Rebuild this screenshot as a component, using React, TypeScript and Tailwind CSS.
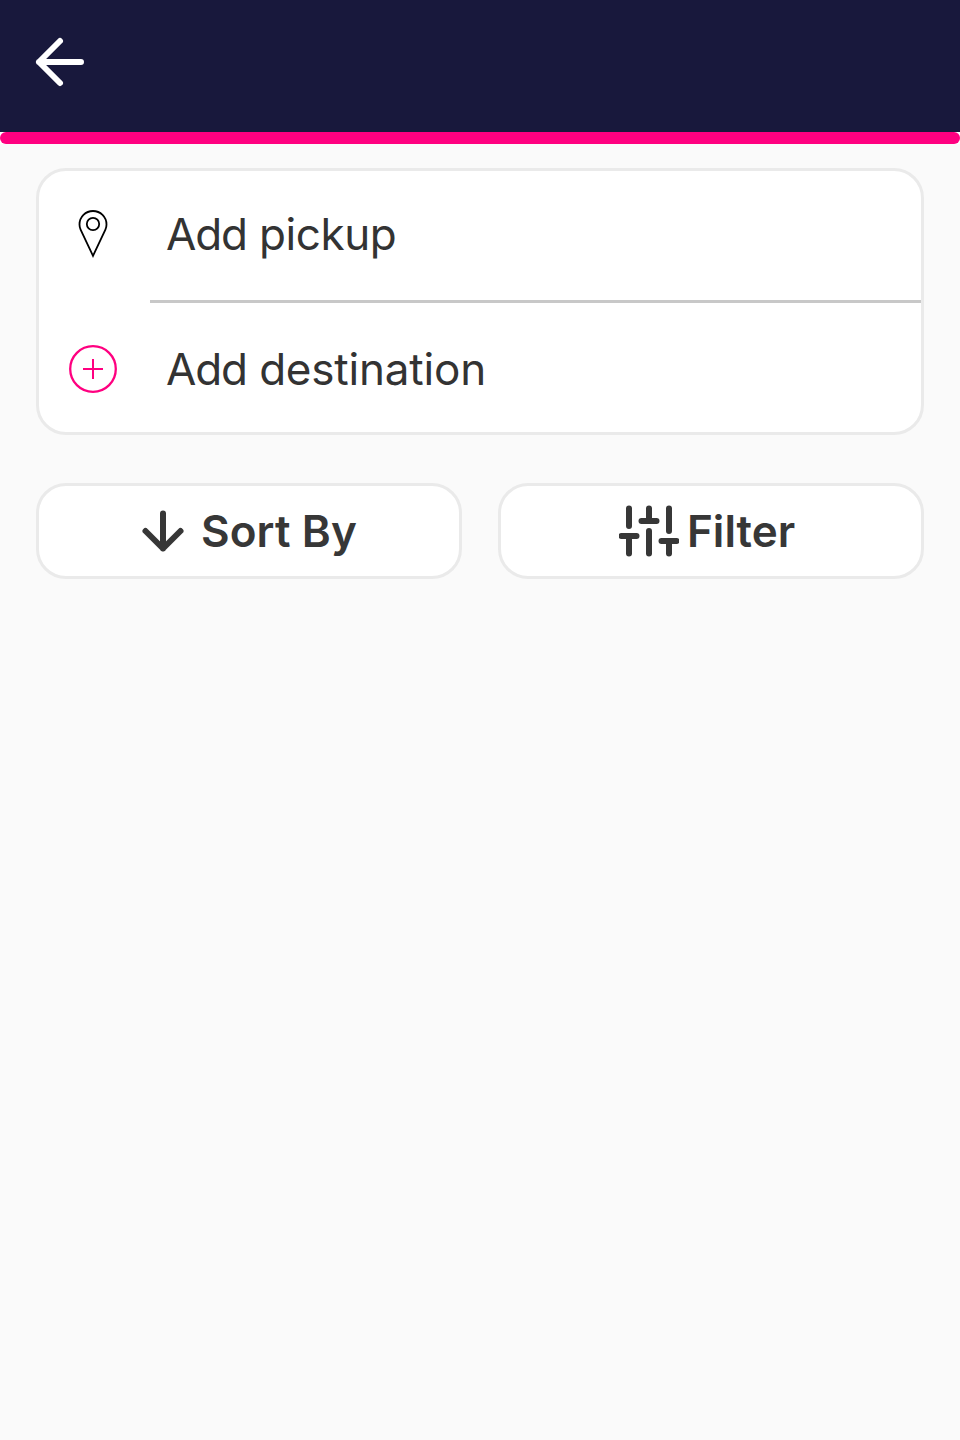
import React from "react";

function BackIcon() {
  return (
    <svg className="size-[72px]" viewBox="0 0 24 24" fill="none" stroke="#fff" strokeWidth="2" strokeLinecap="round" strokeLinejoin="round">
      <path d="M19 12H5M12 19l-7-7 7-7" />
    </svg>
  );
}

function PinIcon() {
  return (
    <svg className="size-12" viewBox="0 0 48 48" fill="none" stroke="#000" strokeWidth="1.8">
      <path d="M24 45.8L11.600 19.600C10.800 17.900 10.500 16.300 10.500 14.500a13.500 13.500 0 0 1 27 0C37.500 16.300 37.200 17.900 36.400 19.600Z" />
      <circle cx="24" cy="14" r="6.2" />
    </svg>
  );
}

function PlusCircleIcon() {
  return (
    <svg className="size-12" viewBox="0 0 48 48" fill="none" stroke="#ff0080" strokeWidth="2">
      <circle cx="24" cy="24" r="22.8" strokeWidth="2.3" />
      <path d="M14 24h20M24 14v20" />
    </svg>
  );
}

function SortIcon() {
  return (
    <svg className="size-[60px]" viewBox="0 0 24 24" fill="none" stroke="#373737" strokeWidth="2.4" strokeLinecap="round" strokeLinejoin="round">
      <path d="M12 5v14M19 12l-7 7-7-7" />
    </svg>
  );
}

function SlidersIcon() {
  return (
    <svg className="size-[60px]" viewBox="0 0 24 24" fill="none" stroke="#373737" strokeWidth="2.4" strokeLinecap="round" strokeLinejoin="round">
      <path d="M4 21v-7M4 10V3M12 21v-9M12 8V3M20 21v-5M20 12V3M1 14h6M9 8h6M17 16h6" />
    </svg>
  );
}

export default function App() {
  return (
    <div className="flex min-h-screen w-full flex-col bg-[#fafafa] font-['Inter',sans-serif] text-[#333333]">
      <header className="flex h-[132px] items-start bg-[#18183c] pt-[26px] pl-6">
        <button type="button" aria-label="Back">
          <BackIcon />
        </button>
      </header>
      <div className="h-3 bg-white">
        <div className="h-full rounded-full bg-[#ff0080]" />
      </div>
      <main className="flex flex-col gap-12 px-9 pt-6">
        <section className="rounded-[30px] border-[3px] border-[#eaeaea] bg-white text-[44px] leading-[54px]">
          <button type="button" className="flex h-[132px] w-full text-left">
            <span className="flex h-[126px] w-[111px] shrink-0 items-center pl-[30px]">
              <PinIcon />
            </span>
            <span className="h-full flex-1 border-b-[3px] border-[#c8c8c8] pt-9 pl-4 tracking-[-0.4px]">
              <span className="tracking-[-1.1px]">Add</span> pickup
            </span>
          </button>
          <button type="button" className="flex h-[129px] w-full text-left">
            <span className="flex h-[132px] w-[111px] shrink-0 items-center pl-[30px]">
              <PlusCircleIcon />
            </span>
            <span className="h-full flex-1 pt-[39px] pl-4 tracking-[-0.2px]">
              <span className="tracking-[-1.1px]">Add</span> destination
            </span>
          </button>
        </section>
        <div className="grid grid-cols-2 gap-9 text-[44px] leading-[54px] font-semibold text-[#373737]">
          <button type="button" className="flex h-24 items-center rounded-[30px] border-[3px] border-[#eaeaea] bg-white pl-[94px]">
            <SortIcon />
            <span className="pl-2 whitespace-nowrap tracking-[0.1px]">Sort By</span>
          </button>
          <button type="button" className="flex h-24 items-center rounded-[30px] border-[3px] border-[#eaeaea] bg-white pl-[118px]">
            <SlidersIcon />
            <span className="pl-2 whitespace-nowrap">Filter</span>
          </button>
        </div>
      </main>
    </div>
  );
}
